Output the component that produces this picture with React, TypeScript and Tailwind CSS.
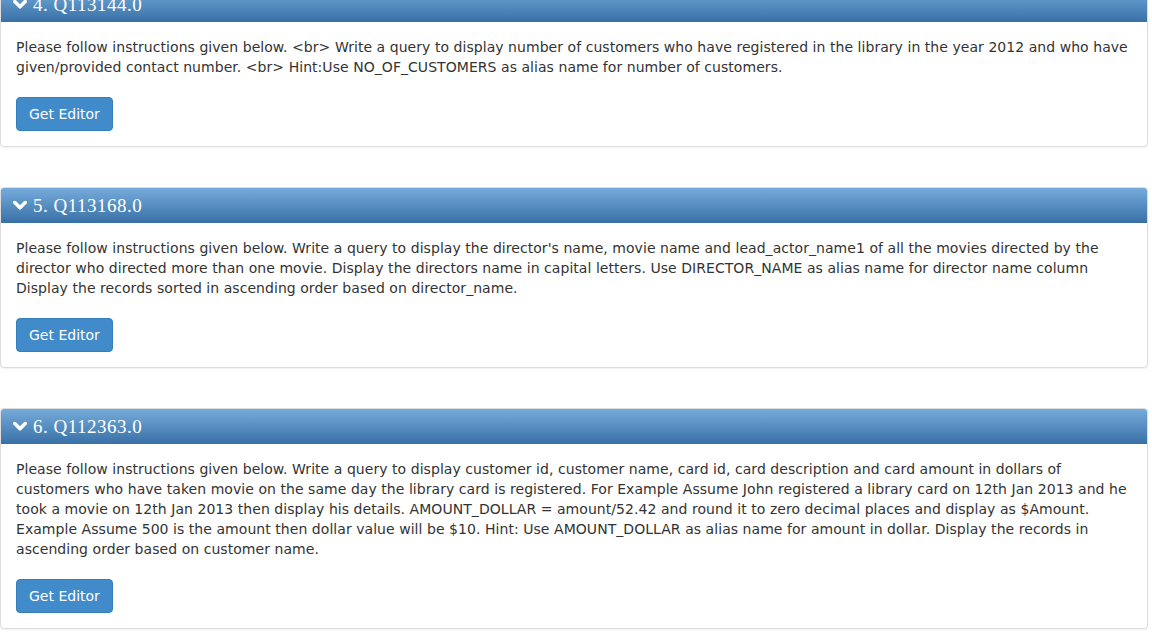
import React from 'react'

type Question = {
  id: string
  text: string
}

const QUESTIONS: Question[] = [
  {
    id: '4. Q113144.0',
    text: 'Please follow instructions given below. <br> Write a query to display number of customers who have registered in the library in the year 2012 and who have given/provided contact number. <br> Hint:Use NO_OF_CUSTOMERS as alias name for number of customers.',
  },
  {
    id: '5. Q113168.0',
    text: "Please follow instructions given below. Write a query to display the director's name, movie name and lead_actor_name1 of all the movies directed by the director who directed more than one movie. Display the directors name in capital letters. Use DIRECTOR_NAME as alias name for director name column Display the records sorted in ascending order based on director_name.",
  },
  {
    id: '6. Q112363.0',
    text: 'Please follow instructions given below. Write a query to display customer id, customer name, card id, card description and card amount in dollars of customers who have taken movie on the same day the library card is registered. For Example Assume John registered a library card on 12th Jan 2013 and he took a movie on 12th Jan 2013 then display his details. AMOUNT_DOLLAR = amount/52.42 and round it to zero decimal places and display as $Amount. Example Assume 500 is the amount then dollar value will be $10. Hint: Use AMOUNT_DOLLAR as alias name for amount in dollar. Display the records in ascending order based on customer name.',
  },
]

function Chevron() {
  return (
    <svg width="14" height="11" viewBox="0 0 14 11" className="shrink-0">
      <path d="M1.8 2.6 L7 7.8 L12.2 2.6" fill="none" stroke="#fff" strokeWidth="3.6" strokeLinecap="round" strokeLinejoin="round" />
    </svg>
  )
}

function QuestionPanel({ q }: { q: Question }) {
  return (
    <div className="bg-white border border-[#dddddd] rounded-[4px] shadow-[0_1px_2px_rgba(0,0,0,0.06)] overflow-hidden">
      <div className="h-[35px] flex items-center gap-[6px] pl-[12px] bg-gradient-to-b from-[#76acdb] to-[#3a72a8] border-b border-[#3a72a8] text-white">
        <Chevron />
        <span className="text-[19px] leading-none tracking-[0.5px] font-['Liberation_Serif',serif]">{q.id}</span>
      </div>
      <div className="px-[15px] pt-[15px] pb-[15px]">
        <p className="text-[14px] leading-[20px] tracking-[0.05px] text-[#333333] font-['DejaVu_Sans',Verdana,sans-serif]">{q.text}</p>
        <button
          type="button"
          className="mt-[20px] h-[34px] px-[12px] rounded-[4px] bg-[#428bca] border border-[#357ebd] text-white text-[14px] font-['DejaVu_Sans',Verdana,sans-serif]"
        >
          Get Editor
        </button>
      </div>
    </div>
  )
}

export default function App() {
  return (
    <div className="w-[1152px] h-[636px] overflow-hidden bg-white">
      <div className="w-[1148px] mt-[-14px] flex flex-col gap-[40px]">
        {QUESTIONS.map((q) => (
          <QuestionPanel key={q.id} q={q} />
        ))}
      </div>
    </div>
  )
}
